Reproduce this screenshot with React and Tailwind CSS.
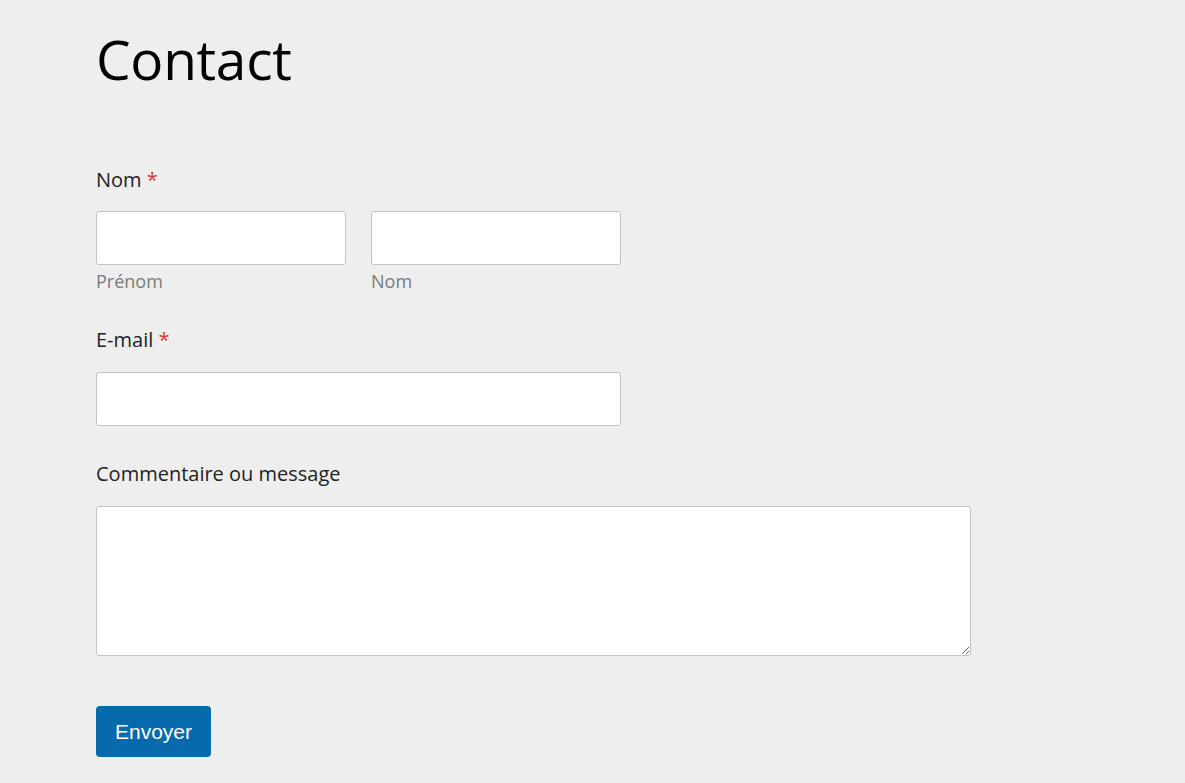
export default function App() {
  return (
    <div className="min-h-[783px] w-full bg-[#eeeeee] pl-[96px] pt-[26px] pb-[26px]" style={{ fontFamily: '"Open Sans", sans-serif' }}>
      <h1 className="text-[55px] leading-[65px] text-black font-normal tracking-[-0.3px]">Contact</h1>
      <form className="mt-[77px] w-[875px]" onSubmit={(e) => e.preventDefault()}>
        <div>
          <label className="block text-[20px] leading-[24px] text-[#222222]">
            Nom <span className="text-[#d63637]">*</span>
          </label>
          <div className="mt-[19px] flex gap-[25px]">
            <div className="w-[250px]">
              <input className="block h-[54px] w-full rounded-[3px] border border-[#c4c4c4] bg-white" />
              <div className="mt-[5px] text-[18px] leading-[22px] text-[#7b7b7b]">Prénom</div>
            </div>
            <div className="w-[250px]">
              <input className="block h-[54px] w-full rounded-[3px] border border-[#c4c4c4] bg-white" />
              <div className="mt-[5px] text-[18px] leading-[22px] text-[#7b7b7b]">Nom</div>
            </div>
          </div>
        </div>
        <div className="mt-[36px]">
          <label className="block text-[20px] leading-[24px] text-[#222222]">
            E-mail <span className="text-[#d63637]">*</span>
          </label>
          <input className="mt-[20px] block h-[54px] w-[525px] rounded-[3px] border border-[#c4c4c4] bg-white" />
        </div>
        <div className="mt-[36px]">
          <label className="block text-[20px] leading-[24px] text-[#222222]">Commentaire ou message</label>
          <textarea className="mt-[20px] block h-[150px] w-[875px] rounded-[3px] border border-[#c4c4c4] bg-white" />
        </div>
        <button
          type="submit"
          className="mt-[50px] h-[51px] w-[115px] rounded-[4px] bg-[#066aab] text-[21px] text-white"
          style={{ fontFamily: '"Liberation Sans", Arial, sans-serif' }}
        >
          Envoyer
        </button>
      </form>
    </div>
  );
}
